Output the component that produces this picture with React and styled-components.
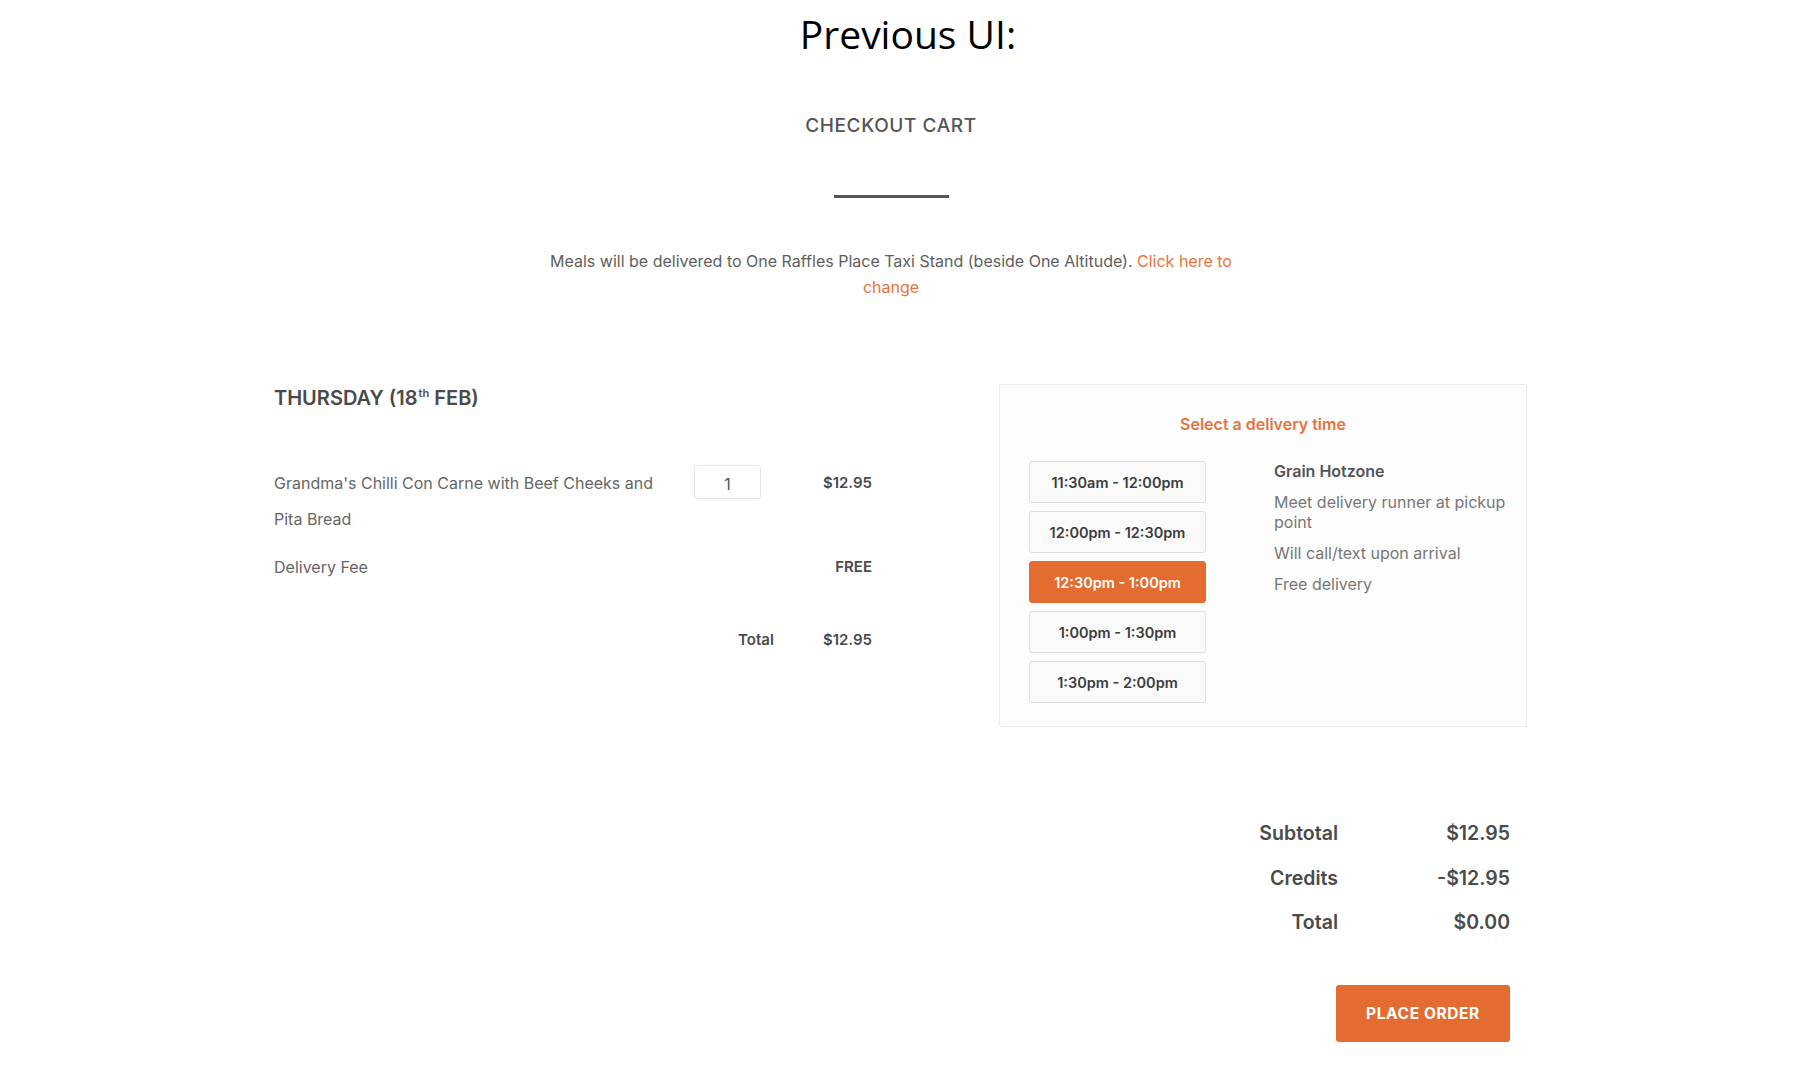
import React from 'react';
import styled, { createGlobalStyle } from 'styled-components';

const GlobalStyle = createGlobalStyle`
  html, body {
    margin: 0;
    padding: 0;
    background: #ffffff;
  }
  body {
    font-family: Inter, "Liberation Sans", sans-serif;
    color: #555;
  }
`;

const Page = styled.div`
  width: 1796px;
  min-height: 1076px;
  padding-bottom: 30px;
`;

const Caption = styled.h1`
  margin: 0;
  padding: 8px 0 0 20px;
  text-align: center;
  font-family: "Open Sans", "Noto Sans", sans-serif;
  font-weight: 400;
  font-size: 39px;
  line-height: 52px;
  color: #000;
`;

const Container = styled.div`
  padding-left: 274px;
`;

const Header = styled.header`
  width: 1234px;
  display: flex;
  flex-direction: column;
  align-items: center;
`;

const Title = styled.h2`
  margin: 54px 0 0;
  font-size: 19px;
  line-height: 24px;
  font-weight: 500;
  letter-spacing: 0.6px;
  color: #555;
`;

const Divider = styled.div`
  margin-top: 57px;
  width: 115px;
  height: 3px;
  background: #555;
`;

const Notice = styled.p`
  margin: 50px 0 0;
  width: 700px;
  text-align: center;
  font-size: 16px;
  line-height: 26px;
  color: #5e5e5e;
`;

const Link = styled.a`
  color: #e8733c;
  text-decoration: none;
  cursor: pointer;
`;

const Main = styled.div`
  margin-top: 84px;
  width: 1253px;
  display: flex;
  justify-content: space-between;
  align-items: flex-start;
`;

const Cart = styled.section`
  width: 598px;
  padding-top: 2px;
`;

const DayHeading = styled.h3`
  margin: 0;
  font-size: 20px;
  line-height: 24px;
  font-weight: 600;
  color: #4a4a4a;
  text-transform: uppercase;

  sup {
    font-size: 11px;
    text-transform: none;
    vertical-align: top;
    position: relative;
    top: -5px;
    margin-left: 1px;
  }
`;

const Row = styled.div`
  display: grid;
  grid-template-columns: 400px 67px 1fr;
  column-gap: 20px;
  align-items: start;
  margin-top: ${p => p.$gap}px;
  font-size: 16px;
  line-height: 36px;
  color: #666;
`;

const Qty = styled.div`
  height: 34px;
  box-sizing: border-box;
  border: 1px solid #e6e6e6;
  border-radius: 3px;
  display: flex;
  align-items: center;
  justify-content: center;
  font-size: 16px;
  color: #555;
  line-height: 1;
  padding-top: 3px;
`;

const Amount = styled.div`
  grid-column: 3;
  text-align: right;
  font-size: 15px;
  font-weight: 600;
  color: #4a4a4a;
`;

const TotalRow = styled.div`
  display: flex;
  justify-content: flex-end;
  gap: 49px;
  margin-top: 37px;
  font-size: 15px;
  line-height: 36px;
  font-weight: 600;
  color: #4a4a4a;
`;

const Card = styled.aside`
  width: 528px;
  height: 343px;
  box-sizing: border-box;
  border: 1px solid #ececec;
  border-radius: 2px;
  background: #fdfdfd;
  padding-top: 27px;
`;

const CardTitle = styled.div`
  text-align: center;
  font-size: 16px;
  line-height: 24px;
  font-weight: 600;
  color: #e8733c;
`;

const CardBody = styled.div`
  margin-top: 25px;
  padding-left: 29px;
  display: flex;
  gap: 68px;
`;

const Slots = styled.div`
  display: flex;
  flex-direction: column;
  gap: 8px;
  width: 177px;
  flex-shrink: 0;
`;

const Slot = styled.button`
  height: 42px;
  box-sizing: border-box;
  border: 1px solid ${p => (p.$active ? '#e46c30' : '#dedede')};
  border-radius: 3px;
  background: ${p => (p.$active ? '#e46c30' : '#fafafa')};
  color: ${p => (p.$active ? '#ffffff' : '#3c3c3c')};
  font-family: inherit;
  font-size: 14.5px;
  font-weight: 600;
  cursor: pointer;
  padding: 0;
`;

const Info = styled.div`
  width: 238px;
  flex-shrink: 0;
  font-size: 16px;
  line-height: 20px;
  color: #777;
`;

const InfoLine = styled.div`
  margin-bottom: 11px;
  font-weight: ${p => (p.$strong ? 600 : 400)};
  color: ${p => (p.$strong ? '#555' : '#777')};
`;

const Summary = styled.div`
  width: 1236px;
  margin-top: 84px;
  display: grid;
  grid-template-columns: 1fr 172px;
  font-size: 19.5px;
  line-height: 44.5px;
  font-weight: 600;
  color: #4a4a4a;
  justify-items: end;
`;

const Actions = styled.div`
  width: 1236px;
  display: flex;
  justify-content: flex-end;
  margin-top: 40px;
`;

const PlaceOrder = styled.button`
  width: 174px;
  height: 57px;
  border: none;
  border-radius: 3px;
  background: #e46c30;
  color: #fff;
  font-family: inherit;
  font-size: 15.5px;
  font-weight: 700;
  letter-spacing: 0.6px;
  text-transform: uppercase;
  cursor: pointer;
`;

const slots = [
  '11:30am - 12:00pm',
  '12:00pm - 12:30pm',
  '12:30pm - 1:00pm',
  '1:00pm - 1:30pm',
  '1:30pm - 2:00pm',
];

export default function App() {
  return (
    <Page>
      <GlobalStyle />
      <Caption>Previous UI:</Caption>
      <Container>
        <Header>
          <Title>CHECKOUT CART</Title>
          <Divider />
          <Notice>
            Meals will be delivered to One Raffles Place Taxi Stand (beside One Altitude).{' '}
            <Link>Click here to</Link> <Link>change</Link>
          </Notice>
        </Header>

        <Main>
          <Cart>
            <DayHeading>
              Thursday (18<sup>th</sup> Feb)
            </DayHeading>
            <Row $gap={55}>
              <div>Grandma's Chilli Con Carne with Beef Cheeks and Pita Bread</div>
              <Qty>1</Qty>
              <Amount>$12.95</Amount>
            </Row>
            <Row $gap={12}>
              <div>Delivery Fee</div>
              <Amount>FREE</Amount>
            </Row>
            <TotalRow>
              <span>Total</span>
              <span>$12.95</span>
            </TotalRow>
          </Cart>

          <Card>
            <CardTitle>Select a delivery time</CardTitle>
            <CardBody>
              <Slots>
                {slots.map(s => (
                  <Slot key={s} $active={s === '12:30pm - 1:00pm'}>
                    {s}
                  </Slot>
                ))}
              </Slots>
              <Info>
                <InfoLine $strong>Grain Hotzone</InfoLine>
                <InfoLine>Meet delivery runner at pickup point</InfoLine>
                <InfoLine>Will call/text upon arrival</InfoLine>
                <InfoLine>Free delivery</InfoLine>
              </Info>
            </CardBody>
          </Card>
        </Main>

        <Summary>
          <span>Subtotal</span>
          <span>$12.95</span>
          <span>Credits</span>
          <span>-$12.95</span>
          <span>Total</span>
          <span>$0.00</span>
        </Summary>

        <Actions>
          <PlaceOrder>Place Order</PlaceOrder>
        </Actions>
      </Container>
    </Page>
  );
}
